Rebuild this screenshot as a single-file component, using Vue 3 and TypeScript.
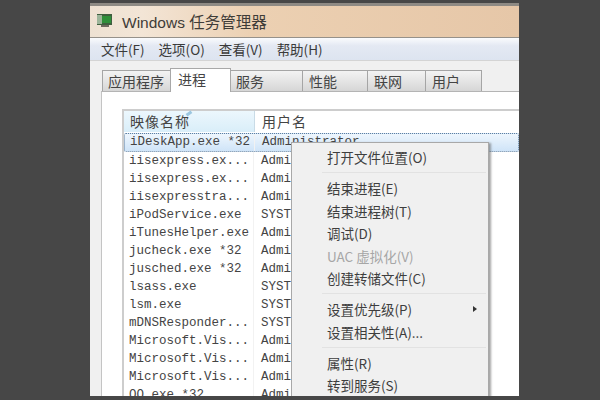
<script setup lang="ts">
type MenuItem = { label: string; disabled?: boolean; arrow?: boolean; sepAfter?: boolean };

const menuItems1 = ["文件(F)", "选项(O)", "查看(V)", "帮助(H)"];
const tabs = ["应用程序", "进程", "服务", "性能", "联网", "用户"];

const rows: { name: string; user: string }[] = [
  { name: "iDeskApp.exe *32", user: "Administrator" },
  { name: "iisexpress.ex...", user: "Admi" },
  { name: "iisexpress.ex...", user: "Admi" },
  { name: "iisexpresstra...", user: "Admi" },
  { name: "iPodService.exe", user: "SYST" },
  { name: "iTunesHelper.exe", user: "Admi" },
  { name: "jucheck.exe *32", user: "Admi" },
  { name: "jusched.exe *32", user: "Admi" },
  { name: "lsass.exe", user: "SYST" },
  { name: "lsm.exe", user: "SYST" },
  { name: "mDNSResponder...", user: "SYST" },
  { name: "Microsoft.Vis...", user: "Admi" },
  { name: "Microsoft.Vis...", user: "Admi" },
  { name: "Microsoft.Vis...", user: "Admi" },
  { name: "QQ.exe *32", user: "Admi" },
];

const contextItems: MenuItem[] = [
  { label: "打开文件位置(O)", sepAfter: true },
  { label: "结束进程(E)" },
  { label: "结束进程树(T)" },
  { label: "调试(D)" },
  { label: "UAC 虚拟化(V)", disabled: true },
  { label: "创建转储文件(C)", sepAfter: true },
  { label: "设置优先级(P)", arrow: true },
  { label: "设置相关性(A)...", sepAfter: true },
  { label: "属性(R)" },
  { label: "转到服务(S)" },
];
</script>

<template>
  <div class="stage">
    <div class="window">
      <header class="titlebar">
        <svg class="app-icon" width="18" height="16" viewBox="0 0 18 16">
          <rect x="1" y="1" width="15" height="11" fill="#3f5f3f" />
          <rect x="6" y="3" width="9" height="7" fill="#2f8f3a" />
          <rect x="1" y="2" width="5" height="9" fill="#9db59a" />
          <rect x="5" y="12" width="8" height="2" fill="#6f6a5f" />
        </svg>
        <span>Windows 任务管理器</span>
      </header>

      <nav class="menubar">
        <span v-for="item in menuItems1" :key="item">{{ item }}</span>
      </nav>

      <div class="body">
        <div class="tabs">
          <div
            v-for="tab in tabs"
            :key="tab"
            :class="['tab', { active: tab === '进程' }]"
          >
            {{ tab }}
          </div>
        </div>

        <div class="panel">
          <div class="list">
            <div class="list-head">
              <div class="col-name">
                映像名称
                <span class="sort-mark"></span>
              </div>
              <div class="col-user">用户名</div>
            </div>
            <div
              v-for="(row, i) in rows"
              :key="i"
              :class="['row', { selected: i === 0 }]"
            >
              <div class="cell-name">{{ row.name }}</div>
              <div class="cell-user">{{ row.user }}</div>
            </div>
          </div>
        </div>
      </div>

      <ul class="context">
        <li
          v-for="item in contextItems"
          :key="item.label"
          :class="{ disabled: item.disabled, sep: item.sepAfter }"
        >
          <span>{{ item.label }}</span>
          <i v-if="item.arrow" class="arrow"></i>
        </li>
      </ul>
    </div>
    <div class="bottom-strip"></div>
  </div>
</template>

<style>
html,
body {
  margin: 0;
  background: #474747;
}
</style>

<style scoped>
.stage {
  position: relative;
  width: 600px;
  height: 400px;
  overflow: hidden;
  background: #474747;
  box-sizing: border-box;
  padding: 3px 0 0 90px;
  font-family: "Noto Sans CJK SC", "Liberation Sans", sans-serif;
  color: #3c3c3c;
}
.window {
  position: relative;
  width: 429px;
  height: 397px;
  background: #f0f0f0;
  border-top: 3px solid #8e8a84;
  box-sizing: border-box;
  overflow: hidden;
}
.titlebar {
  height: 32px;
  box-sizing: border-box;
  display: flex;
  align-items: center;
  gap: 8px;
  padding: 0 0 2px 6px;
  font-size: 15.5px;
  color: #3f3c38;
  background: linear-gradient(90deg, #eee1d2 0%, #f3e5d6 12%, #ecd0b2 38%, #e6c7a8 100%);
  border-bottom: 1px solid #96918a;
}
.titlebar span {
  font-family: "Liberation Sans", "Noto Sans CJK SC", sans-serif;
}
.app-icon {
  flex: none;
}
.menubar {
  height: 23px;
  box-sizing: border-box;
  display: flex;
  gap: 14px;
  align-items: center;
  padding-left: 11px;
  font-size: 13.5px;
  color: #3a3a3a;
  background: linear-gradient(180deg, #fafbfd 0%, #e4e9f3 35%, #dde4f0 100%);
  border-bottom: 1px solid #d4d4d4;
}
.body {
  padding-top: 8px;
  background: #f0f0f0;
}
.tabs {
  display: flex;
  align-items: flex-end;
  height: 22px;
  padding-left: 12px;
  font-size: 14px;
  color: #444;
}
.tab {
  width: 58px;
  height: 20px;
  box-sizing: content-box;
  padding-left: 6px;
  line-height: 20px;
  margin-right: -1px;
  border: 1px solid #a5a5a5;
  border-bottom: none;
  background: linear-gradient(180deg, #f3f3f3 0%, #d6d6d6 100%);
  white-space: nowrap;
  flex: none;
}
.tab:first-child {
  width: 62px;
  padding-left: 5px;
  font-size: 14px;
}
.tab.active {
  width: 52px;
  height: 23px;
  padding-left: 7px;
  line-height: 20px;
  background: #fff;
  position: relative;
  z-index: 1;
  margin-bottom: -1px;
  border-color: #a8a8a8;
}
.tab:nth-child(3) {
  width: 66px;
  padding-left: 5px;
}
.tab:nth-child(4) {
  width: 58px;
}
.tab:nth-child(5) {
  width: 51px;
}
.tab:nth-child(6) {
  width: 49px;
}
.panel {
  background: #fff;
  border-top: 1px solid #b4b4b4;
  border-left: 1px solid #c4c4c4;
  margin-left: 11px;
  padding: 17px 0 0 11px;
  height: 300px;
}
.list {
  border-top: 2px solid #cdcdcd;
  border-left: 2px solid #cdcdcd;
  margin-left: 9px;
}
.list-head {
  display: flex;
  height: 21px;
  font-size: 14px;
  color: #444;
  background: #fff;
}
.col-name {
  position: relative;
  width: 131px;
  padding-left: 6px;
  box-sizing: border-box;
  line-height: 21px;
  letter-spacing: 1px;
  background: linear-gradient(180deg, #ecf7fd 0%, #d9eef9 100%);
  border-right: 1px solid #c9dbe6;
}
.col-user {
  padding-left: 7px;
  line-height: 21px;
  letter-spacing: 1px;
}
.sort-mark {
  position: absolute;
  left: 62px;
  top: 1px;
  width: 6px;
  height: 3px;
  background: #9cc7e0;
  transform: rotate(-35deg);
}
.row {
  display: flex;
  height: 18px;
  box-sizing: border-box;
  font-family: "Liberation Mono", "DejaVu Sans Mono", monospace;
  font-size: 12.5px;
  line-height: 18px;
  color: #444;
}
.row.selected {
  background: linear-gradient(180deg, #eef6fd 0%, #cfe4f8 100%);
  border: 1px dotted #5f7f9f;
  border-radius: 2px;
  line-height: 16px;
  height: 19px;
  margin-top: 1px;
}
.cell-name {
  width: 130px;
  padding-left: 5px;
  box-sizing: border-box;
  white-space: nowrap;
  overflow: hidden;
  border-right: 1px solid #f2f2f2;
}
.cell-user {
  padding-left: 7px;
  white-space: nowrap;
}
.context {
  position: absolute;
  left: 201px;
  top: 136px;
  width: 198px;
  margin: 0;
  padding: 3px 0 0;
  list-style: none;
  background: #f0f0f0;
  border: 1px solid #a8a8a8;
  border-bottom: none;
  box-shadow: 2px 1px 2px rgba(90, 90, 90, 0.55);
  height: 262px;
  box-sizing: border-box;
  font-size: 13.5px;
  color: #3e3e3e;
  z-index: 2;
}
.context li {
  position: relative;
  height: 22.5px;
  line-height: 22px;
  padding-left: 35px;
  white-space: nowrap;
}
.context li.sep {
  height: 31px;
}
.context li.sep::after {
  content: "";
  position: absolute;
  left: 30px;
  right: 2px;
  top: 26px;
  border-top: 1px solid #e2e2e2;
}
.context li.disabled {
  color: #a6a6a6;
}
.arrow {
  position: absolute;
  right: 11px;
  top: 8px;
  width: 0;
  height: 0;
  border-left: 4px solid #333;
  border-top: 3.5px solid transparent;
  border-bottom: 3.5px solid transparent;
}
.bottom-strip {
  position: absolute;
  left: 0;
  right: 0;
  bottom: 0;
  height: 4px;
  background: #474747;
  z-index: 3;
}
</style>
